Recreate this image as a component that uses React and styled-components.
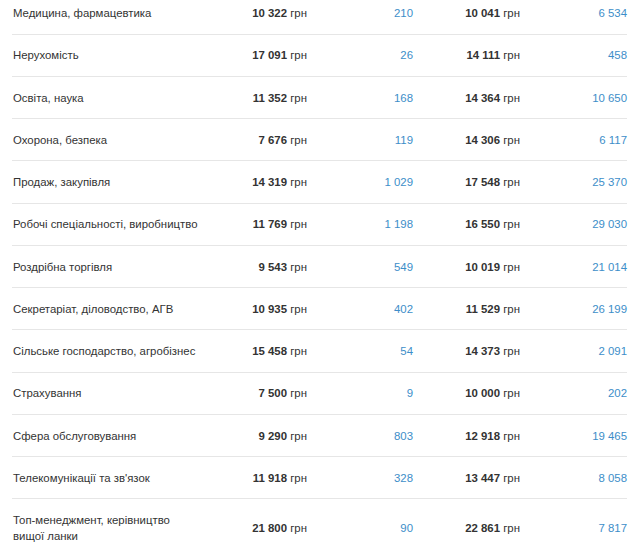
import React from 'react';
import styled, { createGlobalStyle } from 'styled-components';

const GlobalStyle = createGlobalStyle`
  body {
    margin: 0;
    background: #fff;
    font-family: Arial, "Liberation Sans", sans-serif;
  }
`;

const Wrapper = styled.div`
  padding: 0 15px 0 12px;
  margin-top: -7.6px;
  overflow: hidden;
`;

const Table = styled.table`
  width: 614px;
  border-collapse: collapse;
  table-layout: fixed;
  font-size: 11.4px;
  line-height: 16px;
  color: #333;
`;

const Row = styled.tr`
  border-bottom: 1px solid ${(p) => (p.$last ? 'transparent' : '#e6e6e6')};
`;

const NameCell = styled.td`
  width: 227px;
  padding: 12.625px 0 12.625px 1px;
  text-align: left;
  vertical-align: middle;

  span {
    display: block;
    max-width: 188px;
  }
`;

const SalaryCell = styled.td`
  width: ${(p) => p.$w}px;
  padding: 12.625px 0;
  text-align: right;
  vertical-align: middle;
  white-space: nowrap;

  b {
    font-weight: bold;
  }
`;

const CountCell = styled.td`
  width: ${(p) => p.$w}px;
  padding: 12.625px 0;
  text-align: right;
  vertical-align: middle;
  color: #3d8ec9;
  white-space: nowrap;
`;

const rows = [
  ['Медицина, фармацевтика', '10 322', '210', '10 041', '6 534'],
  ['Нерухомість', '17 091', '26', '14 111', '458'],
  ['Освіта, наука', '11 352', '168', '14 364', '10 650'],
  ['Охорона, безпека', '7 676', '119', '14 306', '6 117'],
  ['Продаж, закупівля', '14 319', '1 029', '17 548', '25 370'],
  ['Робочі спеціальності, виробництво', '11 769', '1 198', '16 550', '29 030'],
  ['Роздрібна торгівля', '9 543', '549', '10 019', '21 014'],
  ['Секретаріат, діловодство, АГВ', '10 935', '402', '11 529', '26 199'],
  ['Сільське господарство, агробізнес', '15 458', '54', '14 373', '2 091'],
  ['Страхування', '7 500', '9', '10 000', '202'],
  ['Сфера обслуговування', '9 290', '803', '12 918', '19 465'],
  ['Телекомунікації та зв\'язок', '11 918', '328', '13 447', '8 058'],
  ['Топ-менеджмент, керівництво вищої ланки', '21 800', '90', '22 861', '7 817'],
];

const Salary = ({ value, w }) => (
  <SalaryCell $w={w}>
    <b>{value}</b> грн
  </SalaryCell>
);

export default function App() {
  return (
    <Wrapper>
      <GlobalStyle />
      <Table>
        <tbody>
          {rows.map((r, i) => (
            <Row key={r[0]} $last={i === rows.length - 1}>
              <NameCell>
                <span>{r[0]}</span>
              </NameCell>
              <Salary value={r[1]} w={67} />
              <CountCell $w={106}>{r[2]}</CountCell>
              <Salary value={r[3]} w={107} />
              <CountCell $w={107}>{r[4]}</CountCell>
            </Row>
          ))}
        </tbody>
      </Table>
    </Wrapper>
  );
}
